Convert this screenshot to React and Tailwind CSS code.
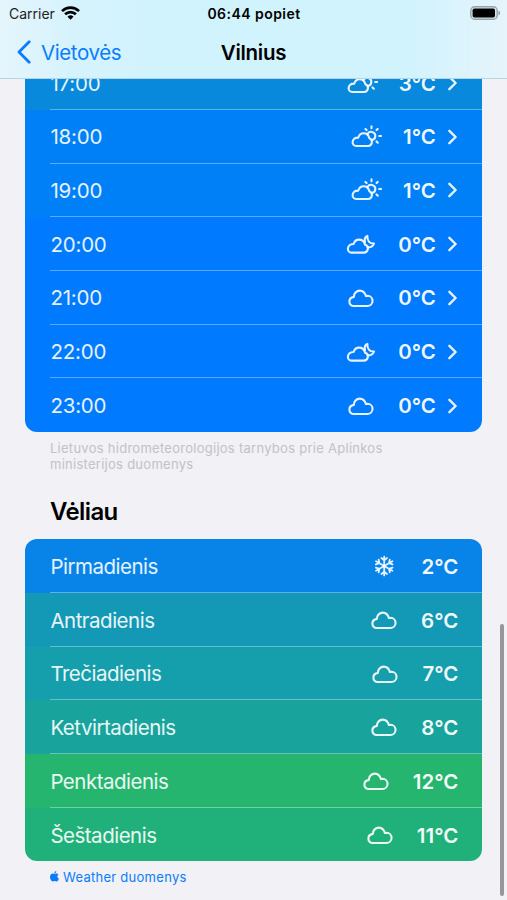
const hours = [
  { label: '17:00', icon: 'sun', temp: '3°C', bg: 'bg-[#0889dc]' },
  { label: '18:00', icon: 'sun', temp: '1°C', bg: 'bg-[#0080f7]' },
  { label: '19:00', icon: 'sun', temp: '1°C', bg: 'bg-[#0080f7]' },
  { label: '20:00', icon: 'moon', temp: '0°C', bg: 'bg-[#007aff]' },
  { label: '21:00', icon: 'cloud', temp: '0°C', bg: 'bg-[#007aff]' },
  { label: '22:00', icon: 'moon', temp: '0°C', bg: 'bg-[#007aff]' },
  { label: '23:00', icon: 'cloud', temp: '0°C', bg: 'bg-[#007aff]' },
]

const days = [
  { label: 'Pirmadienis', icon: 'snow', temp: '2°C', bg: 'bg-[#0884e9]' },
  { label: 'Antradienis', icon: 'cloud', temp: '6°C', bg: 'bg-[#1398b6]' },
  { label: 'Trečiadienis', icon: 'cloud', temp: '7°C', bg: 'bg-[#159eac]' },
  { label: 'Ketvirtadienis', icon: 'cloud', temp: '8°C', bg: 'bg-[#18a39d]' },
  { label: 'Penktadienis', icon: 'cloud', temp: '12°C', bg: 'bg-[#25b56f]' },
  { label: 'Šeštadienis', icon: 'cloud', temp: '11°C', bg: 'bg-[#20b17b]' },
]

const icons = {
  cloud: (
    <path d="M8.6 21H22.3A5.1 5.1 0 0 0 22.6 10.8C21.9 10.8 21.4 10.8 20.9 11C19.9 7.7 17.8 5.6 14.8 5.6A6 6 0 0 0 8.9 11.9C6.1 12.3 4.4 14 4.4 16.7A4.2 4.2 0 0 0 8.6 21Z" />
  ),
  sun: (
    <>
      <path d="M6.2 22H18.2A4 4 0 0 0 19.4 14.3C18.6 11 16.5 9.2 13.7 9.2C11 9.2 9 10.8 8.3 13.6C4.9 13.5 2.6 15.3 2.6 18.3A3.7 3.7 0 0 0 6.2 22Z" />
      <path d="M17.4 10.5A4.1 4.1 0 1 1 21.8 16" />
      <path d="M21.5 2.4V4.2M15.4 4.9L16.6 6.1M27.7 4.9L26.5 6.1M29.2 12H31.1M26.5 17.4L27.8 18.7" />
    </>
  ),
  moon: (
    <>
      <path d="M6.5 21.6H18.7A4 4 0 0 0 20.1 13.8C19.2 10.3 17.1 8.6 14.1 8.6C11.4 8.6 9.4 10.2 8.6 13C5.2 12.9 2.9 14.8 2.9 17.9A3.7 3.7 0 0 0 6.5 21.6Z" />
      <path d="M20 11.2C19.3 8.3 20.1 5.8 22.4 4.9C22.1 9.8 24.4 12.7 29 12.5C28 15.2 25.6 16.6 22.6 16.3" />
    </>
  ),
  snow: (
    <g transform="translate(16.2 13)">
      {[0, 60, 120, 180, 240, 300].map((deg) => (
        <path key={deg} transform={`rotate(${deg})`} strokeWidth="1.8" d="M0 0V-9.4M-2.8 -8L0 -5.6L2.8 -8" />
      ))}
    </g>
  ),
}

const WeatherIcon = ({ name }) => (
  <svg
    className="w-[34px] h-[26px] shrink-0 -mt-[2px]"
    viewBox="0 0 34 26"
    fill="none"
    stroke="currentColor"
    strokeWidth="2.1"
    strokeLinecap="round"
    strokeLinejoin="round"
  >
    {icons[name]}
  </svg>
)

const Row = ({ item, last, chevron }) => (
  <div className={`${item.bg} pl-[25px] h-[53.7px]`}>
    <div
      className={`h-full pr-6 pt-[3px] flex items-center text-[20.5px] text-white/90 ${last ? '' : 'border-b border-white/35'}`}
    >
      <span className={`flex-1 ${chevron ? 'tracking-[-0.2px]' : 'tracking-[-0.5px]'}`}>{item.label}</span>
      <WeatherIcon name={item.icon} />
      <span className="ml-[19px] font-semibold text-white/95">{item.temp}</span>
      {chevron && (
        <svg className="ml-[12.5px] mr-[1px] w-[9px] h-[16px] -mt-[2px]" viewBox="0 0 9 16" fill="none" stroke="currentColor" strokeWidth="2.4" strokeLinecap="round" strokeLinejoin="round">
          <path d="M1.4 1.8L7.6 8L1.4 14.2" />
        </svg>
      )}
    </div>
  </div>
)

const Card = ({ items, chevron }) => (
  <div className="rounded-[12px] overflow-hidden">
    {items.map((item, i) => (
      <Row key={item.label} item={item} last={i === items.length - 1} chevron={chevron} />
    ))}
  </div>
)

const Header = () => (
  <header className="h-[79px] shrink-0 border-b border-[#b5d5e2] bg-[linear-gradient(90deg,#e5f5fc_0%,#d6f3fd_14%,#d0f3fe_35%,#d0f3fe_80%,#e6f4fb_100%)]">
    <div className="h-[27px] grid grid-cols-3 items-center pl-[9px] pr-[6px] text-[14px] text-black">
      <div className="flex items-center gap-[6px] text-[#222]">
        <span>Carrier</span>
        <svg className="w-[19px] h-[14px] -mt-[2px]" viewBox="0 0 19 14" fill="none" stroke="#000" strokeWidth="2.7">
          <path d="M1 5.1A12.2 12.2 0 0 1 18 5.1" />
          <path d="M4.1 8.3A7.7 7.7 0 0 1 14.9 8.3" />
          <path d="M9.5 13.8L6.5 10.7A4.3 4.3 0 0 1 12.5 10.7Z" fill="#000" stroke="none" />
        </svg>
      </div>
      <span className="text-center font-semibold tracking-[0.45px] whitespace-nowrap -ml-[2px]">06:44 popiet</span>
      <svg className="justify-self-end w-[31px] h-[14px] -mt-[1px]" viewBox="0 0 31 14">
        <rect x="0.8" y="0.8" width="26.4" height="12.4" rx="3.8" fill="#d2e8ef" stroke="#94a5ab" strokeWidth="1.4" />
        <rect x="2.6" y="2.5" width="22.4" height="9" rx="1.8" fill="#000" />
        <path d="M28.4 4.7C30.7 5.2 30.7 8.8 28.4 9.3Z" fill="#94a5ab" />
      </svg>
    </div>
    <div className="h-[51px] grid grid-cols-3 items-center px-[17px] text-[20.5px]">
      <div className="flex items-center gap-[10px] text-[#0a7cff]">
        <svg className="w-[14px] h-[24px] -mt-[1px]" viewBox="0 0 14 24" fill="none" stroke="currentColor" strokeWidth="2.8" strokeLinecap="round" strokeLinejoin="round">
          <path d="M12.2 1.8L2 12L12.2 22.2" />
        </svg>
        <span className="tracking-[-0.4px] pt-[1px]">Vietovės</span>
      </div>
      <span className="text-center font-semibold tracking-[-0.3px] pt-[1px] text-black">Vilnius</span>
    </div>
  </header>
)

const App = () => {
  return (
    <div className="relative w-[507px] h-[900px] overflow-hidden flex flex-col bg-[#f1f1f6] font-['Inter',sans-serif]">
      <Header />
      <main className="flex-1 min-h-0 overflow-hidden">
        <div className="-mt-[22.75px] ml-[25.4px] w-[457px]">
          <Card items={hours} chevron />
          <p className="pl-[24.6px] mt-[7.8px] text-[13px] leading-[16px] tracking-[0.27px] text-[#c2c2c7]">
            Lietuvos hidrometeorologijos tarnybos prie Aplinkos
            <br />
            ministerijos duomenys
          </p>
          <h2 className="pl-[24.6px] mt-[25px] mb-[12.5px] text-[24px] leading-[30px] font-semibold tracking-[-0.6px] text-black">
            Vėliau
          </h2>
          <Card items={days} />
          <p className="pl-[24.6px] mt-[7.3px] flex items-center gap-[4px] text-[13px] leading-[16px] tracking-[0.27px] text-[#0a7cff]">
            <svg className="w-[9px] h-[11px]" viewBox="0 0 9 11" fill="currentColor">
              <path d="M6.3 0C6.4 1.3 5.4 2.4 4.3 2.4C4.2 1.2 5.2 .2 6.3 0ZM4.5 3C5 3 5.5 2.5 6.4 2.5C7.3 2.5 8.1 3 8.5 3.6C6.8 4.5 7 7 8.9 7.7C8.4 9 7.5 10.5 6.5 10.5C5.7 10.5 5.4 10.1 4.6 10.1C3.8 10.1 3.4 10.5 2.7 10.5C1.5 10.5 0 8.2 0 6C0 3.9 1.3 2.6 2.7 2.6C3.5 2.6 4.1 3 4.5 3Z" />
            </svg>
            Weather duomenys
          </p>
        </div>
      </main>
      <div className="absolute right-[3px] top-[624px] w-[4px] h-[272px] rounded-full bg-[#97979b]" />
    </div>
  )
}

export default App
